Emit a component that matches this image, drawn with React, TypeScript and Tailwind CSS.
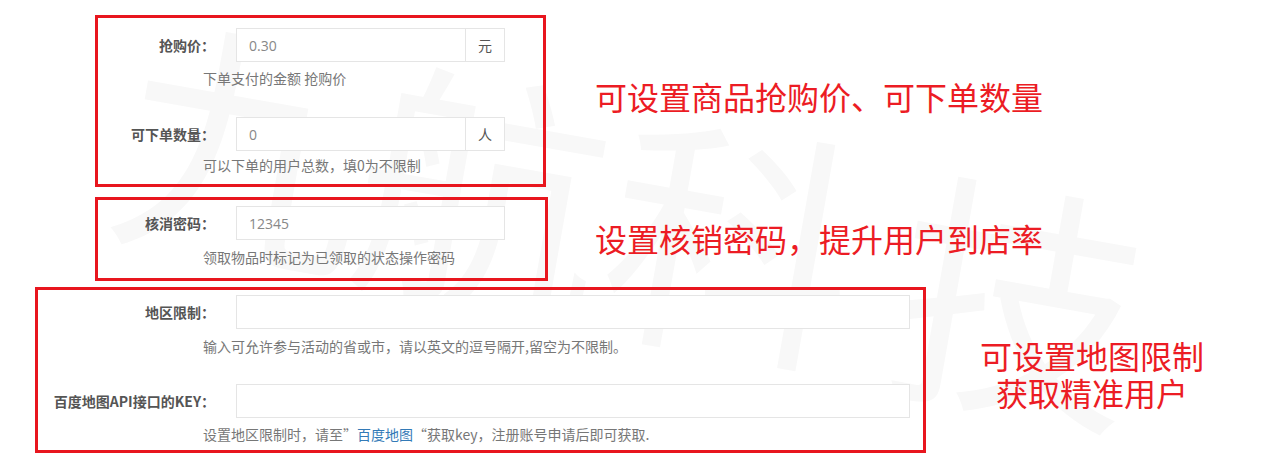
import React from "react";

const cjk = "font-['Noto_Sans_CJK_SC','Noto_Sans',sans-serif]";
const latin = "font-['Open_Sans','Noto_Sans_CJK_SC',sans-serif]";

function Watermark() {
  const chars = [
    { c: "九", cls: "left-[120px] top-[10px]" },
    { c: "航", cls: "left-[360px] top-[55px]" },
    { c: "科", cls: "left-[610px] top-[105px]" },
    { c: "技", cls: "left-[895px] top-[165px]" },
  ];
  return (
    <div aria-hidden="true" className="pointer-events-none absolute inset-0 z-0 overflow-hidden select-none">
      {chars.map((w) => (
        <span
          key={w.c}
          className={`absolute ${w.cls} rotate-[10deg] text-[250px] font-normal leading-none text-[#f8f8f8] ${cjk}`}
        >
          {w.c}
        </span>
      ))}
    </div>
  );
}

interface FieldProps {
  label: string;
  labelWidth: string;
  value?: string;
  addon?: string;
  inputWidth: string;
  help: React.ReactNode;
  helpGap: string;
  className?: string;
}

function Field({ label, labelWidth, value, addon, inputWidth, help, helpGap, className }: FieldProps) {
  return (
    <div className={className}>
      <div className="flex items-center">
        <label
          className={`${labelWidth} shrink-0 text-right text-[14px] font-bold text-[#555] whitespace-nowrap ${cjk}`}
        >
          {label}
        </label>
        <div className={`ml-[21px] flex h-[34px] ${inputWidth} border border-[#e5e5e5] bg-white`}>
          <div className={`flex flex-1 items-center px-3 text-[14px] text-[#888] ${latin}`}>{value}</div>
          {addon && (
            <div className={`flex w-[39px] items-center justify-center border-l border-[#e5e5e5] text-[14px] text-[#555] ${cjk}`}>
              {addon}
            </div>
          )}
        </div>
      </div>
      <div className={`${helpGap} flex`}>
        <div className={`${labelWidth} shrink-0`} />
        <p className={`ml-[-12px] text-[14px] leading-[20px] text-[#777] whitespace-nowrap ${cjk}`}>{help}</p>
      </div>
    </div>
  );
}

function Note({ children, className }: { children: React.ReactNode; className: string }) {
  return (
    <div className={`${className} text-[32px] leading-[37px] text-[#ec1c24] whitespace-nowrap ${cjk}`}>
      {children}
    </div>
  );
}

export default function App() {
  return (
    <div className="relative h-[472px] w-[1265px] overflow-hidden bg-white">
      <Watermark />
      <div className="relative z-10 flex flex-col pt-[15px]">
        <div className="flex items-start pl-[95px]">
          <div className="w-[451px] h-[172px] border-[3px] border-[#e8161e] pt-[10px]">
            <Field
              label="抢购价："
              labelWidth="w-[117px]"
              value="0.30"
              addon="元"
              inputWidth="w-[269px]"
              helpGap="mt-[6px]"
              help="下单支付的金额 抢购价"
            />
            <Field
              className="mt-[29px]"
              label="可下单数量："
              labelWidth="w-[117px]"
              value="0"
              addon="人"
              inputWidth="w-[269px]"
              helpGap="mt-[4px]"
              help="可以下单的用户总数，填0为不限制"
            />
          </div>
          <Note className="ml-[49px] mt-[63px]">可设置商品抢购价、可下单数量</Note>
        </div>

        <div className="mt-[10px] flex items-start pl-[95px]">
          <div className="w-[453px] h-[84px] border-[3px] border-[#e8161e] pt-[6px]">
            <Field
              label="核消密码："
              labelWidth="w-[117px]"
              value="12345"
              inputWidth="w-[269px]"
              helpGap="mt-[7px]"
              help="领取物品时标记为已领取的状态操作密码"
            />
          </div>
          <Note className="ml-[47px] mt-[23px]">设置核销密码，提升用户到店率</Note>
        </div>

        <div className="mt-[6px] flex items-start pl-[35px]">
          <div className="w-[891px] h-[166px] border-[3px] border-[#e8161e] pt-[5px]">
            <Field
              label="地区限制："
              labelWidth="w-[177px]"
              inputWidth="w-[674px]"
              helpGap="mt-[7px]"
              help="输入可允许参与活动的省或市，请以英文的逗号隔开,留空为不限制。"
            />
            <Field
              className="mt-[28px]"
              label="百度地图API接口的KEY："
              labelWidth="w-[177px]"
              inputWidth="w-[674px]"
              helpGap="mt-[6px]"
              help={
                <>
                  设置地区限制时，请至”<span className="text-[#337ab7]">百度地图</span>“获取key，注册账号申请后即可获取.
                </>
              }
            />
          </div>
          <Note className="ml-[51px] mt-[50px] w-[230px] text-center">
            <div>可设置地图限制</div>
            <div>获取精准用户</div>
          </Note>
        </div>
      </div>
    </div>
  );
}
